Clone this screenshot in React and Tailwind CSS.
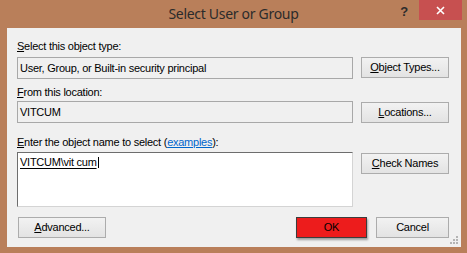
export default function App() {
  const U = ({ children }) => <span className="underline">{children}</span>;
  const btn =
    "h-[21px] border border-[#acacac] bg-linear-to-b from-[#f2f2f2] to-[#e3e3e3] flex items-center justify-center text-[#000]";
  return (
    <div className="w-[467px] h-[253px] bg-[#b97f5a] flex flex-col font-['Liberation_Sans',Arial,sans-serif] text-[11px] leading-[13px] tracking-[-0.25px] text-black">
      <div className="h-[28px] shrink-0 grid grid-cols-[1fr_auto_1fr] items-start">
        <div />
        <div className="pt-[4px] font-['Noto_Sans',sans-serif] text-[14px] tracking-[-0.3px] leading-[20px] text-[#2b2b2b]">
          Select User or Group
        </div>
        <div className="flex justify-end items-start pr-[5px]">
          <span className="mt-[5px] mr-[11px] font-['Liberation_Sans',sans-serif] font-bold text-[13px] leading-[13px] text-[#2b2b2b]">
            ?
          </span>
          <div className="w-[43px] h-[20px] bg-[#c75050] flex items-center justify-center">
            <svg width="9" height="9" viewBox="0 0 9 9">
              <path d="M1 1 L8 8 M8 1 L1 8" stroke="#fff" strokeWidth="1.6" />
            </svg>
          </div>
        </div>
      </div>
      <div className="relative flex-1 ml-[7px] mr-[6px] mb-[6px] bg-[#f0f0f0] pl-[10px] pr-[12px] pt-[12px] flex flex-col">
        <div>
          <U>S</U>elect this object type:
        </div>
        <div className="mt-[4px] flex gap-[8px] items-start">
          <div className="flex-1 h-[22px] border border-[#a8a8a8] bg-[#f0f0f0] flex items-center pl-[2px]">
            User, Group, or Built-in security principal
          </div>
          <div className={btn + " w-[88px]"}>
            <span>
              <U>O</U>bject Types...
            </span>
          </div>
        </div>
        <div className="mt-[7px]">
          <U>F</U>rom this location:
        </div>
        <div className="mt-[2px] flex gap-[8px] items-start">
          <div className="flex-1 h-[22px] border border-[#a8a8a8] bg-[#f0f0f0] flex items-center pl-[2px]">
            VITCUM
          </div>
          <div className={btn + " w-[88px] mt-[1px]"}>
            <span>
              <U>L</U>ocations...
            </span>
          </div>
        </div>
        <div className="mt-[13px]">
          <U>E</U>nter the object name to select (
          <span className="text-[#0066cc] underline">examples</span>):
        </div>
        <div className="mt-[3px] flex gap-[8px] items-start">
          <div className="flex-1 h-[55px] bg-white border border-t-[#6d6d6d] border-l-[#6d6d6d] border-r-[#d4d4d4] border-b-[#d4d4d4] pl-[2px] pt-[3px]">
            <span className="underline underline-offset-[2px]">VITCUM\vit cum</span>
            <span className="inline-block w-[1px] h-[11px] bg-black align-[-2px] ml-[1px]" />
          </div>
          <div className={btn + " w-[88px] mt-[1px]"}>
            <span>
              <U>C</U>heck Names
            </span>
          </div>
        </div>
        <div className="mt-[10px] flex items-start">
          <div className={btn + " w-[88px] ml-[1px]"}>
            <span>
              <U>A</U>dvanced...
            </span>
          </div>
          <div className="flex-1" />
          <div className="w-[71px] h-[21px] border border-[#3c3c3c] bg-[#ed1c1c] flex items-center justify-center shadow-[1px_2px_2px_rgba(0,0,0,0.35)]">
            OK
          </div>
          <div className={btn + " w-[73px] ml-[9px]"}>Cancel</div>
        </div>
        <svg
          className="absolute right-[2px] bottom-[2px]"
          width="9"
          height="9"
          viewBox="0 0 9 9"
        >
          <g fill="#b4b4b4">
            <rect x="6" y="0" width="2" height="2" />
            <rect x="3" y="3" width="2" height="2" />
            <rect x="6" y="3" width="2" height="2" />
            <rect x="0" y="6" width="2" height="2" />
            <rect x="3" y="6" width="2" height="2" />
            <rect x="6" y="6" width="2" height="2" />
          </g>
        </svg>
      </div>
    </div>
  );
}
